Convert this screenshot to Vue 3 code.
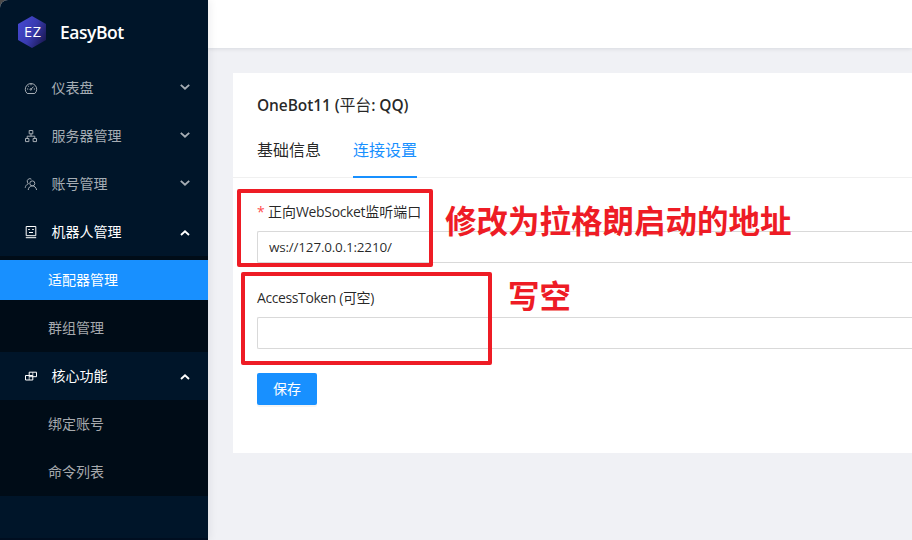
<script setup>
const groups = [
  { label: '仪表盘', icon: 'gauge' },
  { label: '服务器管理', icon: 'tree' },
  { label: '账号管理', icon: 'users' },
  { label: '机器人管理', icon: 'robot', open: true, items: [{ label: '适配器管理', active: true }, { label: '群组管理' }] },
  { label: '核心功能', icon: 'blocks', open: true, items: [{ label: '绑定账号' }, { label: '命令列表' }] },
]
</script>

<template>
  <div class="page">
    <aside class="sider">
      <div class="brand">
        <svg class="logo" width="28" height="32" viewBox="0 0 28 32">
          <defs>
            <linearGradient id="hex" x1="0" y1="0.2" x2="1" y2="0.8">
              <stop offset="0" stop-color="#4548d0" />
              <stop offset="0.5" stop-color="#393bb0" />
              <stop offset="1" stop-color="#19174f" />
            </linearGradient>
          </defs>
          <path d="M14 0 28 8v16l-14 8L0 24V8z" fill="url(#hex)" />
          <text x="6" y="21" textLength="17">EZ</text>
        </svg>
        <span class="name">EasyBot</span>
      </div>
      <nav>
        <div v-for="g in groups" :key="g.label" class="group" :class="{ open: g.open }">
          <div class="title">
            <svg class="icon" width="14" height="14" viewBox="0 0 14 14" fill="none" stroke="currentColor" stroke-width="1">
              <g v-if="g.icon === 'gauge'">
                <path d="M3.2 12.5A5.7 5.7 0 1 1 10.8 12.5Z" />
                <path d="M7 8.3 9.5 5.6M7 3v1.3M3 8h1.2M9.8 8H11M4.2 5l.8.8" />
                <circle cx="6.8" cy="8.4" r=".8" />
              </g>
              <g v-else-if="g.icon === 'tree'">
                <path d="M5.2 1.5h3.6v3.3H5.2zM1.5 9.5h3.4v3.1H1.5zM9.1 9.5h3.4v3.1H9.1zM7 4.8v2.4M3.2 9.5v-2.3h7.6v2.3" />
              </g>
              <g v-else-if="g.icon === 'users'">
                <circle cx="8.3" cy="6.4" r="2.5" />
                <path d="M4.2 13c.3-2.5 1.9-4.1 4.1-4.1s3.9 1.6 4.3 4.1M7.4 2.2A2.6 2.6 0 0 0 3.4 5.2c.1.6.5 1.1 1 1.5C2.6 7.4 1.5 8.9 1.2 10.8" />
              </g>
              <g v-else-if="g.icon === 'robot'">
                <path d="M2.2 1.5h9.6v9.2H2.2zM1.8 12.7h10.4M4.2 4.5h1.6M8.2 4.5h1.6M5 7.5h4" />
              </g>
              <g v-else>
                <path d="M5.2 3.2h7.3v4.5H5.2zM1.5 6.5h7.3v4.5H1.5z" />
                <path d="M5.2 7.5V11M8.8 3.2v3.5" stroke-width=".7" />
              </g>
            </svg>
            <span class="text">{{ g.label }}</span>
            <svg class="arrow" width="10" height="6" viewBox="0 0 10 6" fill="none" stroke="currentColor" stroke-width="1.9">
              <path :d="g.open ? 'M1 5 5 1.3 9 5' : 'M.8 .9 5 4.7 9.2 .9'" />
            </svg>
          </div>
          <ul v-if="g.items" class="sub">
            <li v-for="i in g.items" :key="i.label" :class="{ active: i.active }">{{ i.label }}</li>
          </ul>
        </div>
      </nav>
    </aside>

    <div class="main">
      <header class="top"></header>
      <section class="card">
        <h1>OneBot11 (<span>平台</span>: QQ)</h1>
        <div class="tabs">
          <span class="tab">基础信息</span>
          <span class="tab on">连接设置</span>
        </div>
        <form class="form">
          <label><i>*</i><span>正向<span class="ws">WebSocket</span>监听端口</span></label>
          <div class="input"><span>ws://127.0.0.1:2210/</span></div>
          <label class="second"><span class="token">AccessToken (可空)</span></label>
          <div class="input"></div>
          <button type="button">保存</button>
        </form>
      </section>
    </div>

    <div class="mark mark-a"></div>
    <div class="mark mark-b"></div>
    <div class="note note-a">修改为拉格朗启动的地址</div>
    <div class="note note-b">写空</div>
  </div>
</template>

<style>
body { margin: 0; background: #4a4a4a; overflow: hidden; }
</style>

<style scoped>
.page {
  position: relative;
  display: flex;
  width: 912px;
  height: 540px;
  overflow: hidden;
  border-top-left-radius: 8px;
  background: #f0f1f5;
  font: 14px/22px "Open Sans", "Noto Sans CJK SC", sans-serif;
  color: rgba(0, 0, 0, 0.85);
}
.sider {
  flex: none;
  width: 208px;
  box-sizing: border-box;
  background: #001529;
  border-bottom: 2px solid #000e20;
  box-shadow: 2px 0 8px rgba(29, 35, 41, 0.07);
  z-index: 1;
}
.brand { display: flex; align-items: center; height: 64px; padding-left: 18px; gap: 14px; }
.logo text { font: 14.5px "Open Sans", sans-serif; fill: #fff; }
.name { margin-top: -1px; color: #fff; font-size: 17.5px; font-weight: 600; letter-spacing: -0.45px; }
.title { display: flex; align-items: center; height: 48px; padding: 0 18px 0 24px; color: #a6adb4; }
.open .title { color: #fff; }
.text { flex: 1; margin-left: 13.5px; }
.arrow { margin-top: -2px; }
.open .arrow { margin-top: 2px; }
.sub { margin: 0; padding: 4px 0; list-style: none; background: #000c17; display: flex; flex-direction: column; gap: 8px; }
li { height: 40px; line-height: 40px; padding-left: 48px; color: #a6a9ad; }
li.active { background: #1890ff; color: #fff; }
.main { flex: 1; min-width: 0; display: flex; flex-direction: column; }
.top { height: 48px; background: #fff; box-shadow: 0 1px 4px rgba(0, 21, 41, 0.1); }
.card { height: 380px; margin: 25px 0 0 25px; background: #fff; }
h1 { margin: 0; padding: 20px 24px 1px; font-size: 15.5px; line-height: 24px; font-weight: 600; letter-spacing: -0.1px; white-space: nowrap; }
h1 span { font-size: 16px; font-weight: 400; }
.tabs { display: flex; gap: 32px; height: 59px; padding: 0 24px; border-bottom: 1px solid #f0f0f0; font-size: 16px; }
.tab { box-sizing: border-box; height: 60px; padding-top: 20px; line-height: 24px; }
.tab.on { color: #1890ff; border-bottom: 2px solid #1890ff; }
.form { padding: 23px 0 0 24px; display: flex; flex-direction: column; }
label { display: flex; height: 22px; }
label i { width: 11px; font-style: normal; color: #ff4d4f; }
.ws { letter-spacing: -0.35px; }
.token { letter-spacing: -0.4px; }
.input { box-sizing: border-box; height: 32px; margin: 8px 0 0; padding: 4px 11px; border: 1px solid #d9d9d9; border-right: 0; border-radius: 2px 0 0 2px; font-size: 13.5px; letter-spacing: -0.2px; }
.second { margin-top: 24px; }
button {
  width: 60px;
  height: 32px;
  margin-top: 24px;
  padding: 0;
  border: 0;
  border-radius: 2px;
  background: #1890ff;
  color: #fff;
  font: inherit;
  box-shadow: 0 2px 0 rgba(0, 0, 0, 0.045);
}
.mark { position: absolute; z-index: 2; box-sizing: border-box; border: 4px solid #ee1c25; border-radius: 2px; }
.mark-a { left: 237px; top: 189px; width: 196px; height: 78px; }
.mark-b { left: 241px; top: 272px; width: 251px; height: 93px; }
.note { position: absolute; z-index: 2; color: #ee1c25; font: 700 31.5px/40px "Noto Sans CJK SC", sans-serif; white-space: nowrap; }
.note-a { left: 445px; top: 199px; }
.note-b { left: 508px; top: 274px; }
</style>
